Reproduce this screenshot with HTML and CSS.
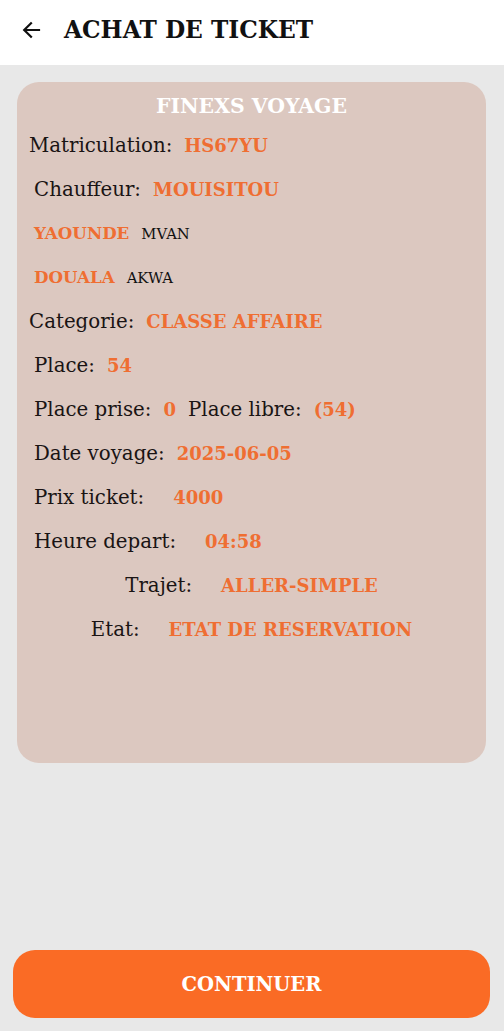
FILE: index.html
```html
<!DOCTYPE html>
<html lang="fr">
<head>
<meta charset="utf-8">
<title>Achat de ticket</title>
<link rel="stylesheet" href="styles.css">
</head>
<body>
<div class="page">
  <header class="topbar">
    <svg class="back" width="20" height="20" viewBox="0 0 20 20" aria-hidden="true">
      <path d="M18 10H3.5M10 3.2L3.2 10L10 16.8" fill="none" stroke="#111" stroke-width="2.2" stroke-linecap="square"/>
    </svg>
    <h1 class="title">ACHAT DE TICKET</h1>
  </header>
  <main class="content">
    <section class="card">
      <h2 class="card-title">FINEXS VOYAGE</h2>
      <div class="row in1 g13"><span class="lbl">Matriculation:</span><span class="val">HS67YU</span></div>
      <div class="row in2 g13"><span class="lbl">Chauffeur:</span><span class="val">MOUISITOU</span></div>
      <div class="row in2 g13"><span class="val sm">YAOUNDE</span><span class="sub">MVAN</span></div>
      <div class="row in2 g13"><span class="val sm">DOUALA</span><span class="sub">AKWA</span></div>
      <div class="row in1 g13"><span class="lbl">Categorie:</span><span class="val">CLASSE AFFAIRE</span></div>
      <div class="row in2 g13"><span class="lbl">Place:</span><span class="val">54</span></div>
      <div class="row in2 g13"><span class="lbl">Place prise:</span><span class="val">0</span><span class="lbl">Place libre:</span><span class="val">(54)</span></div>
      <div class="row in2 g13"><span class="lbl">Date voyage:</span><span class="val">2025-06-05</span></div>
      <div class="row in2 g29"><span class="lbl">Prix ticket:</span><span class="val">4000</span></div>
      <div class="row in2 g29"><span class="lbl">Heure depart:</span><span class="val">04:58</span></div>
      <div class="row center g29"><span class="lbl">Trajet:</span><span class="val">ALLER-SIMPLE</span></div>
      <div class="row center g29"><span class="lbl">Etat:</span><span class="val">ETAT DE RESERVATION</span></div>
    </section>
    <button class="cta" type="button">CONTINUER</button>
  </main>
</div>
</body>
</html>
```
FILE: styles.css
```css
* { box-sizing: border-box; }
html, body { margin: 0; padding: 0; }
body {
  background: #e8e8e8;
  font-family: "DejaVu Serif", "Liberation Serif", serif;
  color: #151515;
}
.page {
  width: 504px;
  height: 1031px;
  display: flex;
  flex-direction: column;
}
.topbar {
  height: 65px;
  background: #ffffff;
  display: flex;
  align-items: center;
  padding: 0 0 6px 21px;
  flex-shrink: 0;
}
.back { display: block; margin-right: 23px; }
.title {
  margin: 0;
  font-size: 23.3px;
  font-weight: 700;
  color: #111;
}
.content {
  flex: 1;
  display: flex;
  flex-direction: column;
  padding: 17px 18px 13px 17px;
}
.card {
  height: 681px;
  background: #dcc8c0;
  border-radius: 22px;
  padding: 10px 0 0 0;
}
.card-title {
  margin: 0 0 3px 0;
  height: 28px;
  line-height: 28px;
  text-align: center;
  color: #ffffff;
  font-size: 20.4px;
  font-weight: 700;
}
.row {
  height: 44px;
  display: flex;
  align-items: center;
  white-space: nowrap;
}
.in1 { padding-left: 12px; }
.in2 { padding-left: 17px; }
.center { justify-content: center; }
.g13 { gap: 12px; }
.g29 { gap: 29px; }
.lbl { font-size: 19.8px; color: #1a1414; }
.val { font-size: 18px; font-weight: 700; color: #ef6e32; }
.val.sm { font-size: 16.7px; }
.sub { font-size: 14.8px; color: #111; }
.cta {
  margin-top: auto;
  margin-left: -4px;
  margin-right: -4px;
  height: 68px;
  border: none;
  border-radius: 22px;
  background: #fa6b25;
  color: #ffffff;
  font-family: "DejaVu Serif", "Liberation Serif", serif;
  font-size: 19.5px;
  font-weight: 700;
}
```
